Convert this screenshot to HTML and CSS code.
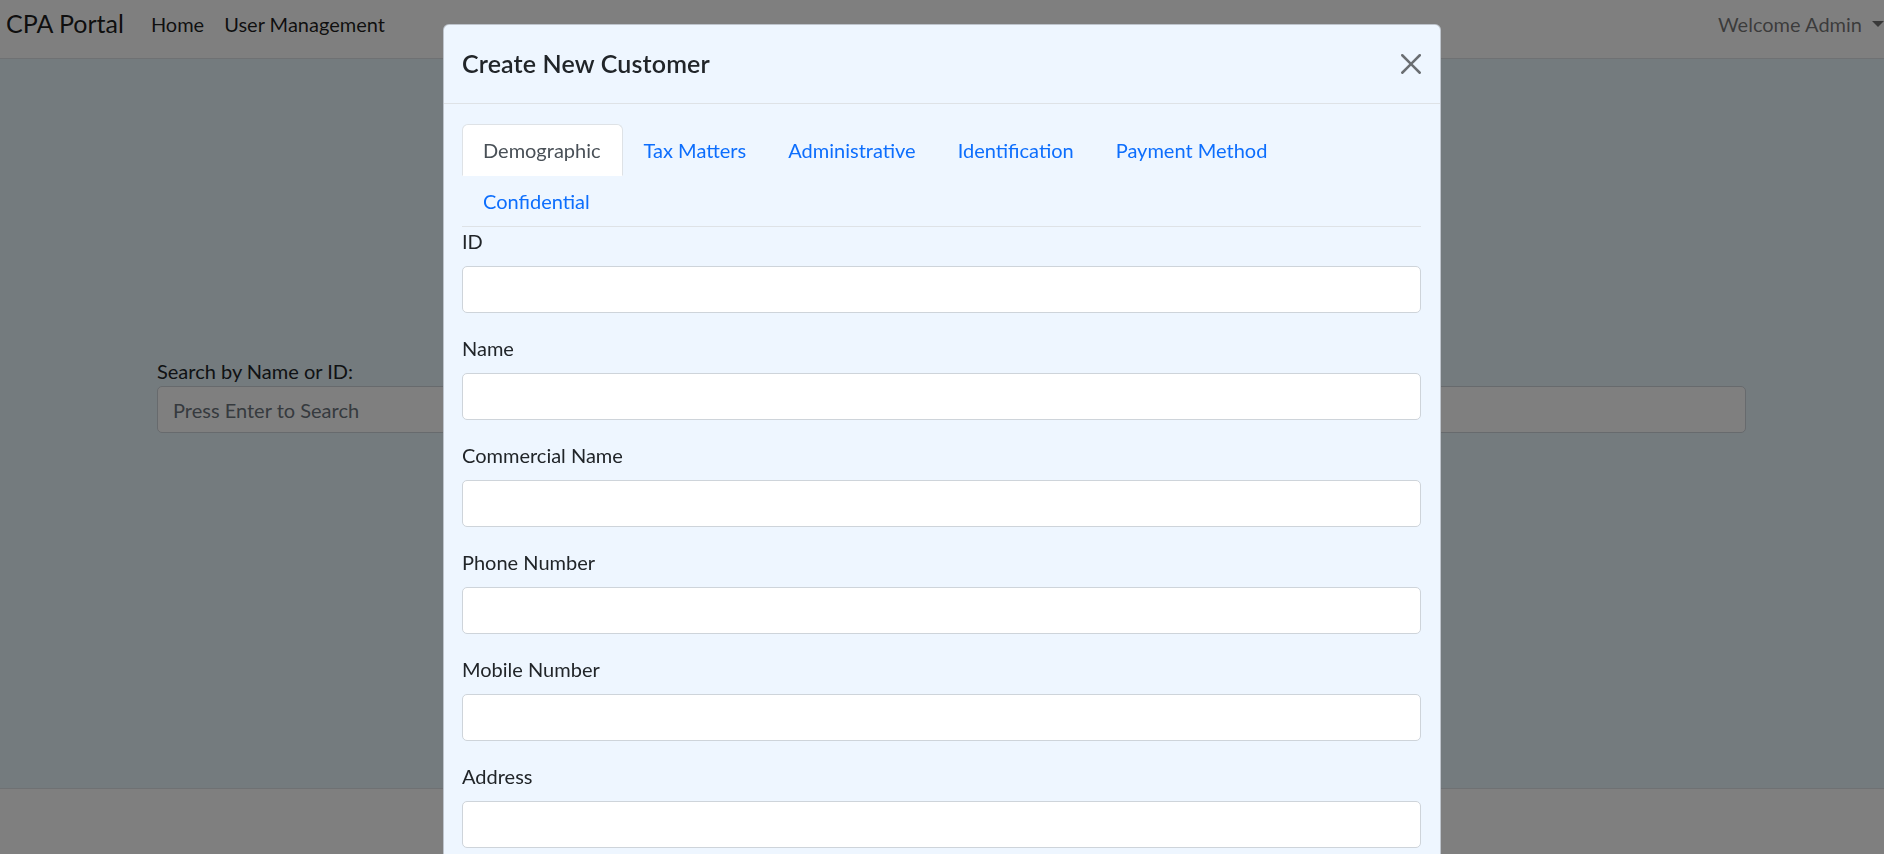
FILE: index.html
```html
<!DOCTYPE html>
<html lang="en">
<head>
<meta charset="utf-8">
<title>CPA Portal</title>
<link rel="stylesheet" href="styles.css">
</head>
<body>
<div class="page">
  <header class="navbar">
    <a class="brand" href="#">CPA Portal</a>
    <nav class="nav-main">
      <a class="nav-link" href="#">Home</a>
      <a class="nav-link" href="#">User Management</a>
    </nav>
    <a class="nav-user" href="#">Welcome Admin</a>
  </header>

  <main class="main">
    <div class="search-panel">
      <label class="search-label" for="search">Search by Name or ID:</label>
      <input id="search" class="form-control" type="text" placeholder="Press Enter to Search">
    </div>
  </main>

  <footer class="footer"></footer>
</div>

<div class="backdrop"></div>

<div class="modal">
  <div class="modal-dialog">
    <div class="modal-content">
      <div class="modal-header">
        <h5 class="modal-title">Create New Customer</h5>
        <button class="btn-close" type="button" aria-label="Close">
          <svg viewBox="0 0 16 16" width="20" height="20"><path d="M.293.293a1 1 0 0 1 1.414 0L8 6.586 14.293.293a1 1 0 1 1 1.414 1.414L9.414 8l6.293 6.293a1 1 0 0 1-1.414 1.414L8 9.414l-6.293 6.293a1 1 0 0 1-1.414-1.414L6.586 8 .293 1.707a1 1 0 0 1 0-1.414z"/></svg>
        </button>
      </div>
      <div class="modal-body">
        <ul class="nav-tabs">
          <li><a class="tab-link active" href="#">Demographic</a></li>
          <li><a class="tab-link" href="#">Tax Matters</a></li>
          <li><a class="tab-link" href="#">Administrative</a></li>
          <li><a class="tab-link" href="#">Identification</a></li>
          <li><a class="tab-link" href="#">Payment Method</a></li>
          <li><a class="tab-link" href="#">Confidential</a></li>
        </ul>
        <div class="tab-pane">
          <div class="field">
            <label class="form-label" for="f-id">ID</label>
            <input id="f-id" class="form-control" type="text">
          </div>
          <div class="field">
            <label class="form-label" for="f-name">Name</label>
            <input id="f-name" class="form-control" type="text">
          </div>
          <div class="field">
            <label class="form-label" for="f-comm">Commercial Name</label>
            <input id="f-comm" class="form-control" type="text">
          </div>
          <div class="field">
            <label class="form-label" for="f-phone">Phone Number</label>
            <input id="f-phone" class="form-control" type="text">
          </div>
          <div class="field">
            <label class="form-label" for="f-mobile">Mobile Number</label>
            <input id="f-mobile" class="form-control" type="text">
          </div>
          <div class="field">
            <label class="form-label" for="f-addr">Address</label>
            <input id="f-addr" class="form-control" type="text">
          </div>
        </div>
      </div>
    </div>
  </div>
</div>
</body>
</html>
```

FILE: styles.css
```css
* { box-sizing: border-box; }

html, body {
  margin: 0;
  height: 100%;
}

body {
  font-family: Lato, "Open Sans", sans-serif;
  font-size: 20px;
  line-height: 1.5;
  color: #212529;
  background: #fff;
  overflow: hidden;
}

a { text-decoration: none; }

.page {
  display: flex;
  flex-direction: column;
  height: 100vh;
}

/* ---------- navbar ---------- */
.navbar {
  display: flex;
  align-items: center;
  height: 59px;
  padding: 5px 0 15.5px 5px;
  background: #fff;
  border-bottom: 1px solid #dee2e6;
  flex: 0 0 auto;
}

.brand {
  font-size: 25px;
  line-height: 37.5px;
  color: rgba(0, 0, 0, 0.9);
  margin-right: 17px;
  padding-left: 1px;
}

.nav-main {
  display: flex;
}

.nav-link {
  padding: 0 10px;
  color: rgba(0, 0, 0, 0.88);
}

.nav-user {
  margin-left: auto;
  color: rgba(0, 0, 0, 0.55);
  display: flex;
  align-items: center;
}

.nav-user::after {
  content: "";
  margin-left: 10px;
  border-top: 6px solid;
  border-left: 6px solid transparent;
  border-right: 6px solid transparent;
}

/* ---------- main ---------- */
.main {
  flex: 0 0 729px;
  background: #e8f6fc;
  padding-top: 297px;
}

.search-panel {
  margin: 0 138px 0 157px;
}

.search-label {
  display: inline-block;
}

.footer {
  flex: 1 1 auto;
  background: #fff;
  border-top: 1px solid #dee2e6;
}

/* ---------- form controls ---------- */
.form-control {
  display: block;
  width: 100%;
  height: 47px;
  padding: 7.5px 15px;
  font: inherit;
  color: #212529;
  background: #fff;
  border: 1px solid #ced4da;
  border-radius: 5px;
  outline: none;
}

.form-control::placeholder {
  color: #6c757d;
}

/* ---------- modal ---------- */
.backdrop {
  position: fixed;
  inset: 0;
  background: rgba(0, 0, 0, 0.5);
  z-index: 10;
}

.modal {
  position: fixed;
  inset: 0;
  overflow: hidden;
  z-index: 20;
}

.modal-dialog {
  width: 998px;
  margin: 24px auto 0;
}

.modal-content {
  background: #eef6ff;
  border: 1px solid rgba(0, 0, 0, 0.2);
  border-radius: 6px;
}

.modal-header {
  display: flex;
  align-items: center;
  justify-content: space-between;
  padding: 20px 19px 20px 18px;
  border-bottom: 1px solid #dee2e6;
}

.modal-title {
  margin: 0;
  font-size: 25px;
  line-height: 37.5px;
  font-weight: 600;
  letter-spacing: 0.15px;
  color: #212529;
}

.btn-close {
  display: flex;
  padding: 0;
  border: 0;
  background: transparent;
  cursor: pointer;
}

.btn-close svg {
  fill: #000;
  opacity: 0.55;
}

.modal-body {
  padding: 20px 19px 20px 18px;
}

/* ---------- tabs ---------- */
.nav-tabs {
  display: flex;
  flex-wrap: wrap;
  list-style: none;
  margin: 0;
  padding: 0;
  border-bottom: 1px solid #dee2e6;
}

.tab-link {
  display: block;
  margin-bottom: -1px;
  padding: 10px 20px 10px;
  border: 1px solid transparent;
  border-radius: 6px 6px 0 0;
  color: #0d6efd;
}

.tab-link.active {
  padding-right: 21px;
  color: #495057;
  background: #fff;
  border-color: #dee2e6 #dee2e6 #fff;
}

/* ---------- fields ---------- */
.field {
  margin-bottom: 20px;
}

.form-label {
  display: block;
  margin-bottom: 10px;
  color: #212529;
}

.tab-pane {
  margin-top: -1px;
}
```
